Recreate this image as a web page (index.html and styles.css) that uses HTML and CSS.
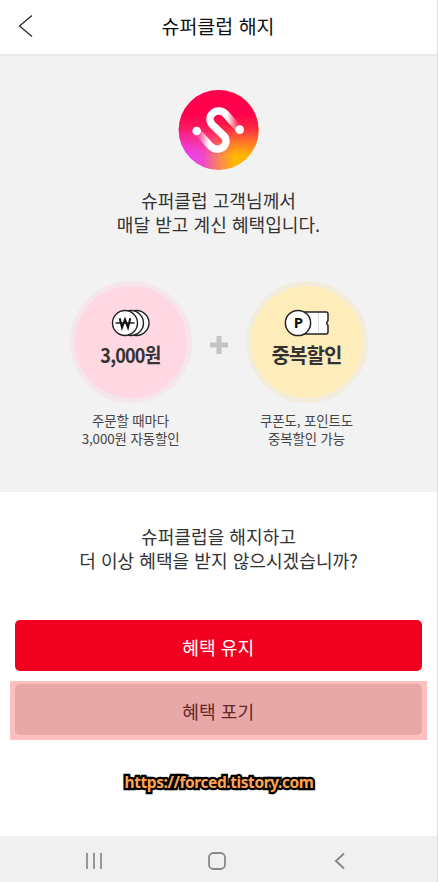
FILE: index.html
```html
<!doctype html>
<html lang="ko">
    <head>
        <meta charset="utf-8">
        <title>슈퍼클럽 해지</title>
        <link rel="stylesheet" href="styles.css">
    </head>
    <body>
        <div id="screen">
            <header>
                <svg class="back" width="16" height="24" viewBox="0 0 16 24">
                    <path d="M14 2.5 L1.5 13 L14 23.5" fill="none" stroke="#222" stroke-width="1.2"/>
                </svg>
                <h1>슈퍼클럽 해지</h1>
            </header>

            <section id="benefits">
                <svg class="logo" width="81" height="81" viewBox="25 27 243 243">
                    <defs>
                        <linearGradient id="red" x1="0" y1="0" x2="0" y2="1">
                            <stop offset="0.3" stop-color="#ff004c"/>
                            <stop offset="0.48" stop-color="#ff104c" stop-opacity="0.85"/>
                            <stop offset="0.82" stop-color="#ff2b70" stop-opacity="0"/>
                        </linearGradient>
                        <linearGradient id="base" x1="0" y1="0" x2="1" y2="0">
                            <stop offset="0.1" stop-color="#ef3df0"/>
                            <stop offset="0.3" stop-color="#ee48cf"/>
                            <stop offset="0.52" stop-color="#fb8850"/>
                            <stop offset="0.7" stop-color="#ffb800"/>
                            <stop offset="1" stop-color="#ffb000"/>
                        </linearGradient>
                        <linearGradient id="stroke" gradientUnits="userSpaceOnUse" x1="81" y1="151" x2="210" y2="147">
                            <stop offset="0.04" stop-color="#fff" stop-opacity="0.1"/>
                            <stop offset="0.28" stop-color="#fff"/>
                            <stop offset="0.72" stop-color="#fff"/>
                            <stop offset="0.96" stop-color="#fff" stop-opacity="0.1"/>
                        </linearGradient>
                    </defs>
                    <circle cx="147" cy="147" r="120" fill="url(#base)"/>
                    <circle cx="147" cy="147" r="120" fill="url(#red)"/>
                    <path d="M81 150 L121 194 C133 208 153 207 163 196 C172 186 171 174 164 166 L127 130 C118 120 119 105 129 97 C139 87 157 88 167 98 L210 146" fill="none" stroke="url(#stroke)" stroke-width="22.5"/>
                    <circle cx="81" cy="150" r="13" fill="#fff"/>
                    <circle cx="210" cy="146" r="13" fill="#fff"/>
                </svg>
                <p class="message">슈퍼클럽 고객님께서<br>매달 받고 계신 혜택입니다.</p>

                <div class="circles">
                    <div class="benefit">
                        <div class="circle pink">
                            <svg width="40" height="28" viewBox="0 0 40 28">
                                <g fill="#fff" stroke="#222" stroke-width="1.4">
                                    <circle cx="25.5" cy="14" r="12.5"/>
                                    <circle cx="20" cy="14" r="12.5"/>
                                    <circle cx="14" cy="14" r="12.5"/>
                                </g>
                                <path d="M4.5 14 H23.5" stroke="#111" stroke-width="1.4"/>
                                <path d="M8.7 9.3 L11 18.5 L14 10.3 L17 18.5 L19.3 9.3" fill="none" stroke="#111" stroke-width="2"/>
                            </svg>
                            <strong class="price">3,000원</strong>
                        </div>
                        <p>주문할 때마다<br>3,000원 자동할인</p>
                    </div>
                    <svg class="plus" width="18" height="18" viewBox="0 0 18 18">
                        <path d="M9 0 V18 M0 9 H18" stroke="#c4c4c4" stroke-width="5"/>
                    </svg>
                    <div class="benefit">
                        <div class="circle yellow">
                            <svg width="46" height="28" viewBox="0 0 46 28">
                                <path d="M14 3 H42 Q44 3 44 5 V11.5 Q41.5 14 44 16.5 V23 Q44 25 42 25 H14 Z" fill="#fff" stroke="#222" stroke-width="1.5"/>
                                <path d="M34.5 4 V24" stroke="#aaa" stroke-width="0.8" stroke-dasharray="1.2 1"/>
                                <circle cx="14" cy="14" r="12.6" fill="#fff" stroke="#222" stroke-width="1.5"/>
                                <text x="14.5" y="19.3" text-anchor="middle">P</text>
                            </svg>
                            <strong>중복할인</strong>
                        </div>
                        <p>쿠폰도, 포인트도<br>중복할인 가능</p>
                    </div>
                </div>
            </section>

            <section id="confirm">
                <p class="message">슈퍼클럽을 해지하고<br>더 이상 혜택을 받지 않으시겠습니까?</p>
                <button class="keep">혜택 유지</button>
                <div class="highlight">
                    <button class="cancel">혜택 포기</button>
                </div>
                <p class="watermark">https://forced.tistory.com</p>
            </section>

            <nav>
                <svg width="18" height="18" viewBox="0 0 18 18">
                    <path d="M2 1 V17 M9 1 V17 M16 1 V17" stroke="#888" stroke-width="1.7"/>
                </svg>
                <svg width="18" height="18" viewBox="0 0 18 18">
                    <rect x="1" y="1" width="16" height="16" rx="4.5" fill="none" stroke="#888" stroke-width="1.8"/>
                </svg>
                <svg width="18" height="18" viewBox="0 0 18 18">
                    <path d="M13 1.5 L5 9 L13 16.5" fill="none" stroke="#888" stroke-width="2"/>
                </svg>
            </nav>
        </div>
    </body>
</html>
```
FILE: styles.css
```css
* {
    margin: 0;
    padding: 0;
    box-sizing: border-box;
}
body {
    font-family: "Noto Sans CJK KR", sans-serif;
    color: #333;
    background-color: #fff;
}
svg {
    display: block;
}
#screen {
    display: flex;
    flex-direction: column;
    width: 438px;
    height: 882px;
    border-right: 1px solid #ddd;
}
header {
    display: flex;
    align-items: center;
    height: 56px;
    padding: 0 17px 4px 18px;
    border-bottom: 2px solid #e8e8e8;
}
h1 {
    flex: 1;
    margin-right: 18px;
    font-size: 19.5px;
    font-weight: 400;
    color: #111;
    text-align: center;
}
#benefits {
    display: flex;
    flex-direction: column;
    align-items: center;
    height: 436px;
    padding-top: 34px;
    background-color: #f2f2f2;
}
.message {
    font-size: 18.1px;
    line-height: 24px;
    text-align: center;
}
.logo + .message {
    margin-top: 17px;
}
.circles {
    display: flex;
    gap: 18px;
    margin-top: 45px;
}
.benefit {
    width: 122px;
}
.circle {
    display: flex;
    flex-direction: column;
    align-items: center;
    height: 122px;
    padding-top: 23px;
    border: 5px solid;
    border-radius: 50%;
}
.pink {
    background-color: #ffd8e4;
    border-color: #f5e6ea;
}
.yellow {
    background-color: #ffecbb;
    border-color: #f2ecdc;
}
.circle strong {
    font-size: 20px;
    font-weight: 700;
    line-height: 36px;
    letter-spacing: -0.9px;
    white-space: nowrap;
}
.circle .price {
    transform: scaleX(0.9);
}
.circle text {
    font: bold 15px "Noto Sans", sans-serif;
    fill: #111;
}
.benefit p {
    margin: 8px -10px 0;
    font-size: 13.4px;
    line-height: 18.4px;
    letter-spacing: -0.1px;
    text-align: center;
    color: #444;
}
.plus {
    margin-top: 55px;
}
#confirm {
    height: 344px;
    padding: 32px 9px 0 10px;
}
#confirm .message {
    margin-right: 1px;
}
button {
    display: block;
    width: 406.5px;
    height: 51px;
    padding-top: 2px;
    border: 0;
    border-radius: 5px;
    font-family: inherit;
    font-size: 18.2px;
}
.keep {
    margin: 48px 0 0 5px;
    color: #fff;
    background-color: #f1001f;
}
.highlight {
    width: 417px;
    height: 59px;
    margin-top: 10px;
    padding: 3px 5px;
    background-color: #ffbfbf;
}
.cancel {
    color: #662626;
    background-color: #e8a8a8;
}
.watermark {
    margin-top: 30px;
    font: bold 15.5px/24px "Noto Sans", sans-serif;
    letter-spacing: -0.42px;
    text-align: center;
    color: #ffa552;
    -webkit-text-stroke: 4.5px #000;
    stroke-linejoin: round;
    paint-order: stroke fill;
}
nav {
    display: flex;
    align-items: center;
    justify-content: space-between;
    height: 46px;
    padding: 4px 88px 0 85px;
    background-color: #f0f0f0;
}
```
